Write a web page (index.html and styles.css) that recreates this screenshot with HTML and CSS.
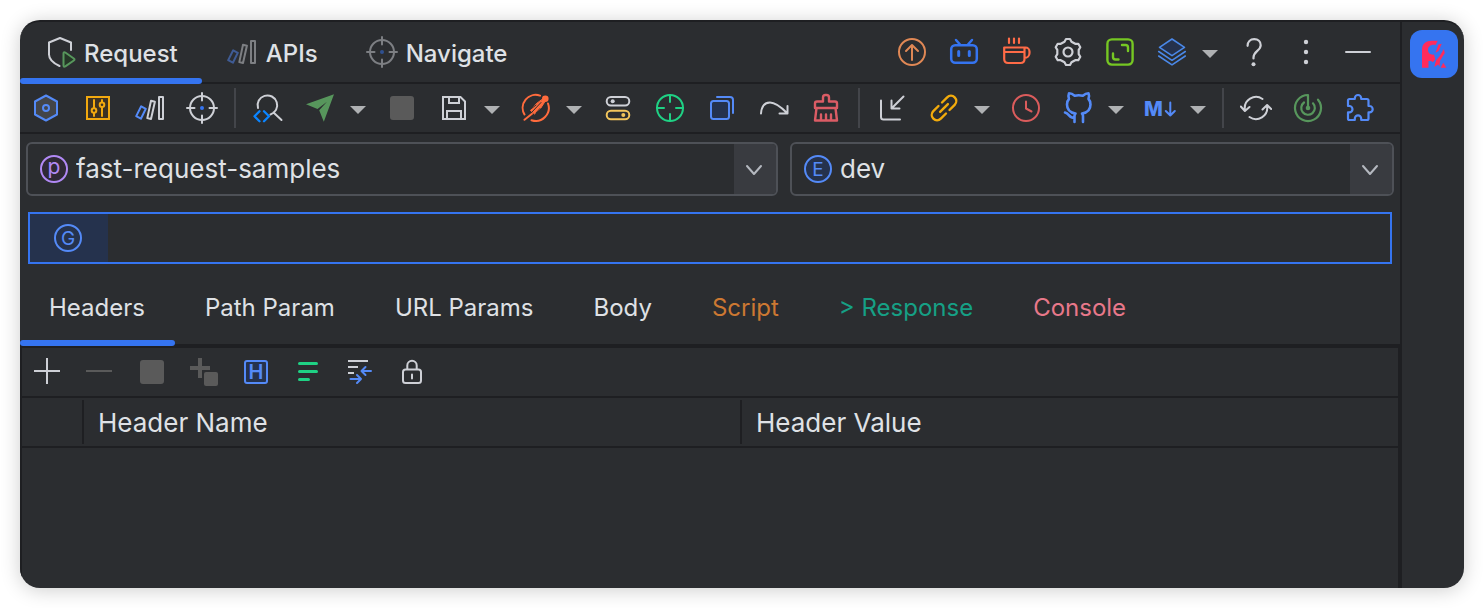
FILE: index.html
```html
<!DOCTYPE html>
<html lang="en">
<head>
<meta charset="utf-8">
<title>Fast Request</title>
<link rel="stylesheet" href="styles.css">
</head>
<body>
<div class="window">
  <main class="main">
    <header class="topbar">
      <nav class="tool-tabs" aria-label="Tool tabs">
        <button class="tool-tab active">
          <svg class="icon" viewBox="0 0 32 32"><path class="light" d="M15.500 30C9 27 5 23.500 5 18.500V6.500L16 2l11 4.500V14"/><path d="M19.500 17.500q0-2 1.800-1l8.500 6q1.400 1 0 2l-8.500 5.800q-1.800 1-1.800-1z" fill="#253627" stroke="#57965c"/></svg>
          <span>Request</span>
        </button>
        <button class="tool-tab">
          <svg class="icon faded" viewBox="0 0 32 32"><path class="blue" d="M7.200 14.300l4.600 2.500-4.900 9.900-4.700-2.600z"/><path class="light" d="M17 8.800l3.900 1-3.900 17.200-3.700-.9zM25 5h4v22h-4z"/></svg>
          <span>APIs</span>
        </button>
        <button class="tool-tab">
          <svg class="icon faded" viewBox="0 0 32 32"><circle class="light" cx="16" cy="16" r="12"/><path class="light" d="M16 1v7.500M16 23.500V31M1 16h7.500M23.500 16H31"/><circle cx="16" cy="16" r="2" fill="#3574f0"/></svg>
          <span>Navigate</span>
        </button>
      </nav>
      <div class="actions">
        <button class="tool" aria-label="Upgrade"><svg class="icon" viewBox="0 0 32 32"><g stroke="#e08855"><circle cx="16" cy="16" r="13"/><path d="M16 24V9M10 15l6-6 6 6"/></g></svg></button>
        <button class="tool" aria-label="Video"><svg class="icon" viewBox="0 0 32 32"><g stroke="#3574f0" stroke-width="2.500"><rect x="3.200" y="9.200" width="25.600" height="17.600" rx="4"/><path d="M8 4l4 4.500M24 4l-4 4.500"/><path stroke-width="3" d="M10.700 15.500v4M21.300 15.500v4"/></g></svg></button>
        <button class="tool" aria-label="Buy a coffee"><svg class="icon" viewBox="0 0 32 32"><g stroke="#ff6b47" stroke-width="2.200"><path d="M4.200 11.500h20.300V23q0 4-4 4H8.200q-4 0-4-4zM4.200 16h20M24.500 11.500h1a4 4 0 0 1 4 4v1.500a5 5 0 0 1-5 5M9 2.500V7M14 2.500V7M19 2.500V7"/></g></svg></button>
        <button class="tool" aria-label="Settings"><svg class="icon" viewBox="0 0 32 32"><g class="light" transform="translate(16 16)"><path stroke-width="2.200" d="M-2-13H2L3.500-10.300 7.200-8.200l3.100 0 2 3.400-1.600 2.700v4.200l1.600 2.700-2 3.400-3.100 0-3.700 2.100L2 13h-4l-1.500-2.700-3.700-2.100-3.100 0-2-3.400 1.600-2.700v-4.200l-1.600-2.700 2-3.400 3.100 0 3.700-2.100z"/><circle r="4.500" stroke-width="2.200"/></g></svg></button>
        <button class="tool" aria-label="Expand"><svg class="icon" viewBox="0 0 32 32"><g stroke="#76c723" stroke-width="2.400"><rect x="3.400" y="3.400" width="25.200" height="25.200" rx="4.500"/><path d="M18 9h3.500q2.500 0 2.500 2.500V15M9 17.500v3.500q0 2.500 2.500 2.500h3"/></g></svg></button>
        <button class="tool split" aria-label="Layers"><svg class="icon" viewBox="0 0 32 32"><g stroke="#4a88e8" stroke-width="1.600"><path fill="#25324d" d="M16 3l12.500 8.300L16 19.700 3.500 11.300z"/><path d="M2.700 15.500L16 24.300l13.300-8.800M2.700 20L16 28.800 29.300 20"/></g></svg><svg class="caret" viewBox="0 0 16 32"><path d="M0 14h16l-8 8z"/></svg></button>
        <button class="tool" aria-label="Help"><svg class="icon" viewBox="0 0 32 32"><path class="light" stroke-width="2.200" d="M9.600 9.800C9.600 5.600 12.300 3.200 16.200 3.200s6.500 2.500 6.500 6c0 5.500-7.200 6-7.200 12.300v1"/><circle cx="15.500" cy="28.300" r="2" fill="#ced0d6"/></svg></button>
        <button class="tool" aria-label="More"><svg class="icon" viewBox="0 0 32 32"><g fill="#ced0d6"><circle cx="16" cy="6" r="2.200"/><circle cx="16" cy="16" r="2.200"/><circle cx="16" cy="26" r="2.200"/></g></svg></button>
        <button class="tool" aria-label="Minimize"><svg class="icon" viewBox="0 0 32 32"><path class="light" d="M4 16h24"/></svg></button>
      </div>
    </header>

    <div class="toolbar">
      <button class="tool" aria-label="Config"><svg class="icon" viewBox="0 0 32 32"><path class="blue" fill="#43454a" d="M16 3.500l11 6v13l-11 6-11-6v-13z"/><circle class="blue" cx="16" cy="16" r="3"/></svg></button>
      <button class="tool" aria-label="Parameters"><svg class="icon" viewBox="0 0 32 32"><g stroke="#f2a90f"><path fill="#3d3223" stroke-linejoin="miter" d="M5 5h22v22H5z"/><path d="M12 8v8M12 21v3M20 8v2M20 15v9"/><circle cx="12" cy="18.500" r="2.300"/><circle cx="20" cy="12.700" r="2.300"/></g></svg></button>
      <button class="tool" aria-label="APIs"><svg class="icon" viewBox="0 0 32 32"><path class="blue" d="M7.200 14.300l4.600 2.500-4.900 9.900-4.700-2.600z"/><path class="light" d="M17 8.800l3.900 1-3.900 17.200-3.700-.9zM25 5h4v22h-4z"/></svg></button>
      <button class="tool" aria-label="Navigate"><svg class="icon" viewBox="0 0 32 32"><circle class="light" cx="16" cy="16" r="12"/><path class="light" d="M16 1v7.500M16 23.500V31M1 16h7.500M23.500 16H31"/><circle cx="16" cy="16" r="2" fill="#3574f0"/></svg></button>
      <span class="divider"></span>
      <button class="tool" aria-label="Search code"><svg class="icon" viewBox="0 0 32 32"><path class="light" d="M6 16A9.800 9.800 0 1 1 18.500 22.500M21.500 20.500l8 7.500"/><path stroke="#0a84ff" stroke-width="2.300" d="M7.500 19.300l-5 5 5 5M12 19.300l5 5-5 5"/></svg></button>
      <button class="tool split" aria-label="Send"><svg class="icon" viewBox="0 0 32 32"><path fill="#57965c" d="M2 12.300L30 2.200 19.800 29.800l-4.600-11.500L23 9.800 13.500 17z"/></svg><svg class="caret" viewBox="0 0 16 32"><path d="M0 14h16l-8 8z"/></svg></button>
      <button class="tool" aria-label="Stop"><svg class="icon" viewBox="0 0 32 32"><rect x="4" y="4" width="24" height="24" rx="3" fill="#5a5a5a"/></svg></button>
      <button class="tool split" aria-label="Save"><svg class="icon" viewBox="0 0 32 32"><path class="light" stroke-linejoin="miter" d="M5 5h17.500L27 9.500V27H5zM11 5v6h10V5M9 27v-8h14v8"/></svg><svg class="caret" viewBox="0 0 16 32"><path d="M0 14h16l-8 8z"/></svg></button>
      <button class="tool split" aria-label="Launch"><svg class="icon" viewBox="0 0 32 32"><g stroke="#ff6b3d"><path d="M4.500 22.500A13 13 0 0 1 20 3.600M28 11.500A13 13 0 0 1 11.500 28.200M4.500 27.800l7.500-6"/><circle cx="25.300" cy="6.700" r="2.300" fill="#ff6b3d"/><path stroke-width="1" fill="#ff6b3d" d="M22.500 7.500l2.300 2.300-4.300 6.700-6 5.500-4-3.500L16 12z"/><path stroke="#2b2d30" stroke-width="1" d="M21 10.500l-9 9.500M16 13l-4.500 3.500M20 16.500L16 21"/></g></svg><svg class="caret" viewBox="0 0 16 32"><path d="M0 14h16l-8 8z"/></svg></button>
      <button class="tool" aria-label="Switches"><svg class="icon" viewBox="0 0 32 32"><rect class="light" x="4.700" y="5" width="22.600" height="8.500" rx="4.200"/><circle cx="10.700" cy="9.200" r="2" fill="#ced0d6"/><rect x="4.700" y="18.700" width="22.600" height="8.500" rx="4.200" stroke="#f2c55c"/><circle cx="21.300" cy="23" r="2" fill="#f2c55c"/></svg></button>
      <button class="tool" aria-label="Locate"><svg class="icon" viewBox="0 0 32 32"><g stroke="#1fd184"><circle cx="16" cy="16" r="13"/><path d="M16 3v7M16 22v7M3 16h7M22 16h7"/></g></svg></button>
      <button class="tool" aria-label="Copy"><svg class="icon" viewBox="0 0 32 32"><rect class="blue" fill="#25324d" x="5" y="9" width="18" height="18" rx="2.500"/><path class="blue" d="M11 5h13q3 0 3 3v13"/></svg></button>
      <button class="tool" aria-label="Redo"><svg class="icon" viewBox="0 0 32 32"><path class="light" d="M3 21.500C3.500 14 7 10.500 12 10.500c6 0 12 5.500 17 10.500M29.500 14v7.500h-8"/></svg></button>
      <button class="tool" aria-label="Clean"><svg class="icon" viewBox="0 0 32 32"><path stroke="#db5c65" stroke-width="2.400" d="M13 9.500V5.500q0-2.500 2.500-2.500h1q2.500 0 2.500 2.500v4h6q2 0 2 2v4.500H5v-4.500q0-2 2-2zM6.500 16L5 28.500h22L25.500 16M11 28v-5.500M16 28v-5.500M21 28v-5.500"/></svg></button>
      <span class="divider"></span>
      <button class="tool" aria-label="Import"><svg class="icon" viewBox="0 0 32 32"><path class="light" d="M5 8.500V25q0 2.500 2.500 2.500H24M27.500 4.500L15.500 16.500M15.500 8.500v8h8"/></svg></button>
      <button class="tool split" aria-label="Link"><svg class="icon" viewBox="0 0 32 32"><path transform="translate(16 16) rotate(-45)" stroke="#f2ab0c" stroke-width="2.400" d="M-2.500-5.300H-9.800a5.300 5.300 0 0 0 0 10.600H-2.500M2.500-5.300H9.800a5.300 5.300 0 0 1 0 10.600H2.500M-5.500 0h11"/></svg><svg class="caret" viewBox="0 0 16 32"><path d="M0 14h16l-8 8z"/></svg></button>
      <button class="tool" aria-label="History"><svg class="icon" viewBox="0 0 32 32"><g stroke="#db5c5c"><circle cx="16" cy="16" r="13"/><path d="M16 9.500v7l5.500 3"/></g></svg></button>
      <button class="tool split" aria-label="GitHub"><svg class="icon" viewBox="0 0 32 32"><path class="blue" stroke-width="2.600" d="M12.500 30v-6q0-1.500 1-2.500C9 20.800 5 18.500 5 12.500 5 10 5.700 8.300 7 7 6.300 5 6.300 3 7 1.300c2 0 4 1 5.700 2.500 2.300-.7 5.800-.7 8.100 0C22.500 2.300 24.500 1.300 26.500 1.300 27.200 3 27.200 5 26.500 7c1.300 1.300 2 3 2 5.500 0 6-4 8.300-8.500 9q1 1 1 2.500v6M3 20.500c4.500 1 3.500 5.500 9.500 5.500"/></svg><svg class="caret" viewBox="0 0 16 32"><path d="M0 14h16l-8 8z"/></svg></button>
      <button class="tool split" aria-label="Markdown"><svg class="icon" viewBox="0 0 32 32"><text class="glyph-bold" x="0" y="24">M</text><path class="blue" d="M26.300 10.500v13M21.800 19l4.500 4.500 4.500-4.500"/></svg><svg class="caret" viewBox="0 0 16 32"><path d="M0 14h16l-8 8z"/></svg></button>
      <span class="divider"></span>
      <button class="tool" aria-label="Refresh"><svg class="icon" viewBox="0 0 32 32"><path class="light" d="M22.500 7A11.300 11.300 0 0 0 4.900 18M.8 14.500L4.900 19l4.600-4M9.500 25A11.300 11.300 0 0 0 27.100 14M22.500 17.500l4.600-4.500 4.100 4"/></svg></button>
      <button class="tool" aria-label="Monitor"><svg class="icon" viewBox="0 0 32 32"><path stroke="#57965c" stroke-width="2.200" d="M16 16V3A13 13 0 1 0 26 7.700M12 10.500a6.800 6.800 0 1 0 9 .8"/><circle cx="16" cy="16" r="2.300" fill="#57965c"/></svg></button>
      <button class="tool" aria-label="Plugins"><svg class="icon" viewBox="0 0 32 32"><path class="blue" stroke-width="2.200" d="M10.800 7V6.200a3.200 3.200 0 0 1 6.400 0V7H23q1.500 0 1.500 1.500V14h1a3.200 3.200 0 0 1 0 6.400h-1v6.100q0 1.500-1.500 1.500h-5.800v-1.500a3.200 3.200 0 0 0-6.400 0V28H5.500Q4 28 4 26.500v-6.100h1.300a3.200 3.200 0 0 0 0-6.400H4V8.500Q4 7 5.500 7z"/></svg></button>
    </div>

    <section class="request-form">
      <div class="selectors">
        <div class="combo">
          <svg class="badge" viewBox="0 0 28 28"><circle cx="14" cy="14" r="13" fill="#2f2936" stroke="#b189f5"/><text class="glyph purple" x="14" y="19" text-anchor="middle">p</text></svg>
          <select aria-label="Project"><option>fast-request-samples</option></select>
          <svg class="combo-arrow" viewBox="0 0 42 50"><path d="M13 22l7 8 7-8"/></svg>
        </div>
        <div class="combo">
          <svg class="badge" viewBox="0 0 28 28"><circle class="blue" cx="14" cy="14" r="13" fill="#25324d"/><text class="glyph" x="14" y="21" text-anchor="middle">E</text></svg>
          <select aria-label="Environment"><option>dev</option></select>
          <svg class="combo-arrow" viewBox="0 0 42 50"><path d="M13 22l7 8 7-8"/></svg>
        </div>
      </div>
      <div class="url-bar">
        <button class="method" aria-label="GET"><svg class="badge" viewBox="0 0 28 28"><circle class="blue" cx="14" cy="14" r="13"/><text class="glyph" x="14" y="21" text-anchor="middle">G</text></svg></button>
        <input type="text" aria-label="Request URL">
      </div>
    </section>

    <nav class="param-tabs" aria-label="Request sections">
      <button class="param-tab active">Headers</button>
      <button class="param-tab">Path Param</button>
      <button class="param-tab">URL Params</button>
      <button class="param-tab">Body</button>
      <button class="param-tab script">Script</button>
      <button class="param-tab response">&gt; Response</button>
      <button class="param-tab console">Console</button>
    </nav>

    <section class="panel">
      <div class="toolbar">
        <button class="tool" aria-label="Add"><svg class="icon" viewBox="0 0 32 32"><path class="light" stroke-linecap="butt" d="M15 2v26M2 15h26"/></svg></button>
        <button class="tool" aria-label="Remove"><svg class="icon" viewBox="0 0 32 32"><path stroke="#5a5a5a" stroke-linecap="butt" d="M2 15h26"/></svg></button>
        <button class="tool" aria-label="Stop"><svg class="icon" viewBox="0 0 32 32"><rect x="4" y="4" width="24" height="24" rx="3" fill="#5a5a5a"/></svg></button>
        <button class="tool" aria-label="Add group"><svg class="icon" viewBox="0 0 32 32"><path stroke="#5a5a5a" stroke-width="4" stroke-linecap="butt" d="M12 2v20M2 12h20"/><rect x="15" y="15" width="16" height="16" rx="3" fill="#5a5a5a" stroke="#2b2d30"/></svg></button>
        <button class="tool" aria-label="Common headers"><svg class="icon" viewBox="0 0 32 32"><rect class="blue" fill="#25324d" x="5" y="5" width="22" height="22" rx="2"/><text class="glyph-bold thin" x="16" y="23" text-anchor="middle">H</text></svg></button>
        <button class="tool" aria-label="Format"><svg class="icon" viewBox="0 0 32 32"><path stroke="#1fd184" stroke-width="3" d="M7.500 7.500h17M7.500 15.500h17M7.500 23.500h9"/></svg></button>
        <button class="tool" aria-label="Convert"><svg class="icon" viewBox="0 0 32 32"><path class="light" stroke-linecap="butt" d="M4 5h20M4 11h10M4 17h6"/><path class="blue" d="M17.500 15H27M21.500 11l-4 4 4 4M6.500 23H17M13 19l4 4-4 4"/></svg></button>
        <button class="tool" aria-label="Lock"><svg class="icon" viewBox="0 0 32 32"><rect class="light" x="7" y="13.500" width="18" height="13.500" rx="2.500"/><path class="light" d="M11.300 13V9.500a4.700 4.700 0 0 1 9.400 0V13M16 18.500v4"/></svg></button>
      </div>
      <table class="headers">
        <thead><tr><th class="check-col" aria-label="Enabled"></th><th><span>Header Name</span></th><th><span>Header Value</span></th></tr></thead>
      </table>
    </section>
  </main>

  <aside class="stripe">
    <button class="plugin" aria-label="Fast Request"><svg viewBox="0 0 48 48"><g fill="#ff2b5c"><path d="M12 37.700V20C12 13.500 16 10.700 22 10.700h5.800L25.500 15c-4.500-.8-7.500 1.500-7.500 5s2.500 5 6 4.600l1.300 4.700-2.300 3-2-1.300h-2.500v6.700z"/><path d="M28.500 14.500l3.200-.8L28.500 21l-3 1.800zM33.800 19l1 4-4.800 7.800-.5 6-1.300-2.300-4 2.500 1.800-6.500 3.800-4.500z"/><path d="M33.300 32.700l3 5h-5.600z"/></g></svg></button>
  </aside>
</div>
</body>
</html>
```
FILE: styles.css
```css
* {
  box-sizing: border-box;
}

body {
  margin: 0;
  padding: 20px;
  min-height: 100vh;
  display: flex;
  background: #fff;
  color: #dfe1e5;
  font-family: Inter, "Liberation Sans", sans-serif;
  font-size: 26px;
  line-height: 32px;
}

button,
select,
input {
  margin: 0;
  padding: 0;
  border: 0;
  outline: 0;
  background: none;
  color: inherit;
  font: inherit;
}

.window {
  flex: 1;
  display: flex;
  border-top: 2px solid #1e1f22;
  border-radius: 20px;
  overflow: hidden;
  background: #2b2d30;
  box-shadow: 0 2px 20px rgba(0, 0, 0, 0.2);
}

.main {
  flex: 1;
  min-width: 0;
  display: flex;
  flex-direction: column;
}

/* icons */

svg {
  display: block;
  flex: none;
  fill: none;
  stroke-width: 2;
  stroke-linecap: round;
  stroke-linejoin: round;
}

.icon {
  width: 32px;
  height: 32px;
}

.faded {
  opacity: 0.5;
}

.light {
  stroke: #ced0d6;
}

.blue {
  stroke: #548af7;
}

.caret {
  width: 16px;
  height: 32px;
  fill: #afb1b3;
}

.badge {
  width: 28px;
  height: 28px;
}

.glyph {
  fill: #548af7;
  font-size: 19px;
}

.glyph.purple {
  fill: #b189f5;
  font-size: 21px;
}

.glyph-bold {
  fill: #548af7;
  font-size: 20px;
  font-weight: 800;
}

.glyph-bold.thin {
  font-weight: 600;
}

/* title row */

.topbar {
  display: flex;
  justify-content: space-between;
  height: 62px;
  border-bottom: 2px solid #1e1f22;
}

.tool-tabs {
  display: flex;
  font-size: 24px;
  font-weight: 500;
}

.tool-tab {
  position: relative;
  display: flex;
  align-items: center;
  gap: 8px;
  height: 60px;
  padding: 0 24px;
}

.tool-tab span {
  padding-top: 3px;
}

.tool-tab.active::after,
.param-tab.active::after {
  content: "";
  position: absolute;
  right: 0;
  bottom: -2px;
  left: 0;
  height: 6px;
  border-radius: 3px;
  background: #3574f0;
}

.actions {
  display: flex;
  align-items: center;
  padding-right: 16px;
}

/* toolbars */

.toolbar {
  display: flex;
  align-items: center;
  height: 50px;
  border-bottom: 2px solid #1e1f22;
}

.tool {
  display: flex;
  align-items: center;
  flex: none;
  width: 52px;
  height: 48px;
  padding-left: 10px;
}

.tool.split {
  width: 82px;
  gap: 14px;
}

.divider {
  width: 2px;
  height: 40px;
  margin: 0 6px;
  background: #43454a;
}

/* request line */

.request-form {
  display: flex;
  flex-direction: column;
  gap: 16px;
  padding: 8px 6px 0;
}

.selectors {
  display: grid;
  grid-template-columns: 752fr 604fr;
  gap: 12px;
}

.combo {
  display: flex;
  align-items: center;
  gap: 8px;
  height: 54px;
  min-width: 0;
  padding-left: 12px;
  border: 2px solid #4e5157;
  border-radius: 6px;
  overflow: hidden;
}

.combo select {
  flex: 1;
  min-width: 0;
  height: 50px;
  appearance: none;
}

.combo-arrow {
  width: 42px;
  height: 50px;
  background: #393b40;
  stroke: #b4b8bf;
}

.url-bar {
  display: flex;
  height: 52px;
  margin: 0 2px;
  border: 2px solid #3574f0;
}

.method {
  width: 78px;
  padding-left: 24px;
  background: #25324d;
}

.url-bar input {
  flex: 1;
  min-width: 0;
  padding: 0 12px;
}

/* section tabs */

.param-tabs {
  display: flex;
  border-bottom: 4px solid #1e1f22;
  font-size: 24px;
}

.param-tab {
  position: relative;
  height: 80px;
  padding: 8px 30px 0;
}

.param-tab.active {
  padding: 8px 30px 0 29px;
}

.script {
  color: #cc7832;
}

.response {
  color: #16a085;
}

.console {
  color: #e8788a;
}

/* headers panel */

.panel {
  flex: 1;
  border-right: 2px solid #1e1f22;
  border-left: 2px solid #1e1f22;
}

.headers {
  width: 100%;
  border-spacing: 0;
  table-layout: fixed;
}

.headers th {
  padding: 2px 0;
  border-bottom: 2px solid #1e1f22;
  font-weight: 400;
  text-align: left;
}

.headers .check-col {
  width: 60px;
}

.headers span {
  display: block;
  height: 44px;
  padding-left: 14px;
  border-left: 2px solid #1e1f22;
  line-height: 46px;
}

/* right stripe */

.stripe {
  width: 64px;
  padding: 8px;
  border-left: 2px solid #1e1f22;
}

.plugin {
  display: block;
  width: 48px;
  height: 48px;
  border-radius: 12px;
  background: #3574f0;
}
```
